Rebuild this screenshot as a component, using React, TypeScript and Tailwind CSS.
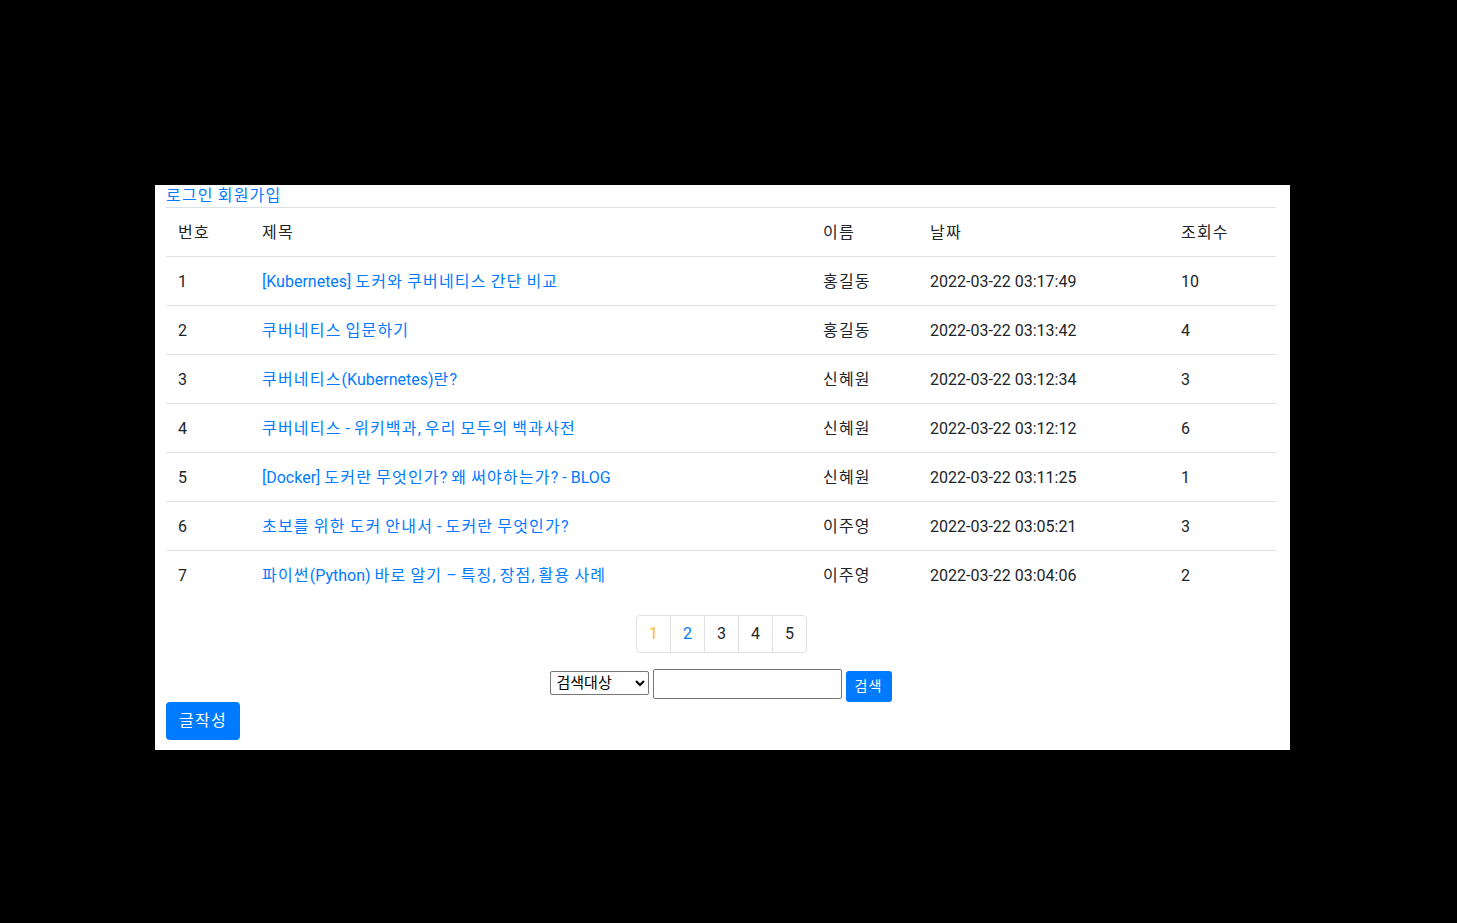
const rows = [
  { no: 1, title: "[Kubernetes] 도커와 쿠버네티스 간단 비교", name: "홍길동", date: "2022-03-22 03:17:49", hit: 10 },
  { no: 2, title: "쿠버네티스 입문하기", name: "홍길동", date: "2022-03-22 03:13:42", hit: 4 },
  { no: 3, title: "쿠버네티스(Kubernetes)란?", name: "신혜원", date: "2022-03-22 03:12:34", hit: 3 },
  { no: 4, title: "쿠버네티스 - 위키백과, 우리 모두의 백과사전", name: "신혜원", date: "2022-03-22 03:12:12", hit: 6 },
  { no: 5, title: "[Docker] 도커란 무엇인가? 왜 써야하는가? - BLOG", name: "신혜원", date: "2022-03-22 03:11:25", hit: 1 },
  { no: 6, title: "초보를 위한 도커 안내서 - 도커란 무엇인가?", name: "이주영", date: "2022-03-22 03:05:21", hit: 3 },
  { no: 7, title: "파이썬(Python) 바로 알기 – 특징, 장점, 활용 사례", name: "이주영", date: "2022-03-22 03:04:06", hit: 2 },
];

const pages = [
  { n: 1, color: "text-[#ffc107]" },
  { n: 2, color: "text-[#007bff]" },
  { n: 3, color: "text-[#212529]" },
  { n: 4, color: "text-[#212529]" },
  { n: 5, color: "text-[#212529]" },
];

// hangul runs get a bit of tracking so they take the width of the original font
function K({ t }: { t: string }) {
  const parts = t.split(/([\uac00-\ud7a3]+)/);
  return (
    <>
      {parts.map((p, i) =>
        /[\uac00-\ud7a3]/.test(p) ? (
          <span key={i} className="tracking-[1.2px]">
            {p}
          </span>
        ) : (
          <span key={i}>{p}</span>
        )
      )}
    </>
  );
}

export default function App() {
  return (
    <div className="min-h-[923px] bg-black pt-[185px] font-['Roboto','Noto_Sans_CJK_KR',sans-serif] text-[16px] text-[#212529]">
      <div className="ml-[155px] w-[1135px] bg-white px-[11px] pb-[10px]">
        <div className="h-[22px] leading-[22px]">
          <a href="#" className="text-[#007bff]"><K t="로그인" /></a>{" "}
          <a href="#" className="text-[#007bff]"><K t="회원가입" /></a>
        </div>
        <table className="w-[1110px] table-fixed border-collapse">
          <colgroup>
            <col className="w-[84px]" />
            <col className="w-[561px]" />
            <col className="w-[107px]" />
            <col className="w-[251px]" />
            <col className="w-[107px]" />
          </colgroup>
          <thead>
            <tr className="border-t border-b border-[#dee2e6] text-left">
              {["번호", "제목", "이름", "날짜", "조회수"].map((h) => (
                <th key={h} className="h-[49px] px-3 pt-[2px] font-normal leading-6">
                  <K t={h} />
                </th>
              ))}
            </tr>
          </thead>
          <tbody>
            {rows.map((r) => (
              <tr key={r.no} className="border-t border-[#dee2e6] first:border-t-0">
                <td className="h-[49px] px-3 pt-[2px] leading-6">{r.no}</td>
                <td className="px-3 pt-[2px] leading-6">
                  <a href="#" className="text-[#007bff]"><K t={r.title} /></a>
                </td>
                <td className="px-3 pt-[2px] leading-6"><K t={r.name} /></td>
                <td className="px-3 pt-[2px] leading-6">{r.date}</td>
                <td className="px-3 pt-[2px] leading-6">{r.hit}</td>
              </tr>
            ))}
          </tbody>
        </table>

        <div className="mt-[15px] flex justify-center pr-[2px]">
          <ul className="flex">
            {pages.map((p, i) => (
              <li key={p.n}>
                <a
                  href="#"
                  className={`flex h-[38px] w-[35px] items-center justify-center border border-[#dee2e6] leading-5 ${p.color} ${
                    i === 0 ? "rounded-l" : "-ml-px"
                  } ${i === pages.length - 1 ? "rounded-r" : ""}`}
                >
                  {p.n}
                </a>
              </li>
            ))}
          </ul>
        </div>

        <form className="mt-4 flex h-[33px] items-start justify-center gap-1 pr-[4px]">
          <select className="mt-[2px] h-[24px] w-[99px] rounded-[2px] border border-[#767676] bg-white px-[2px] text-[15px] leading-5 text-black">
            <option>검색대상</option>
            <option>제목</option>
            <option>이름</option>
          </select>
          <input
            type="text"
            className="h-[30px] w-[189px] rounded-[2px] border border-[#767676] bg-white"
          />
          <button
            type="button"
            className="mt-[2px] h-[31px] w-[46px] rounded-[3px] bg-[#007bff] text-[14px] leading-5 text-white"
          >
            <K t="검색" />
          </button>
        </form>

        <button
          type="button"
          className="h-[38px] w-[74px] rounded bg-[#007bff] leading-6 text-white"
        >
          <K t="글작성" />
        </button>
      </div>
    </div>
  );
}
